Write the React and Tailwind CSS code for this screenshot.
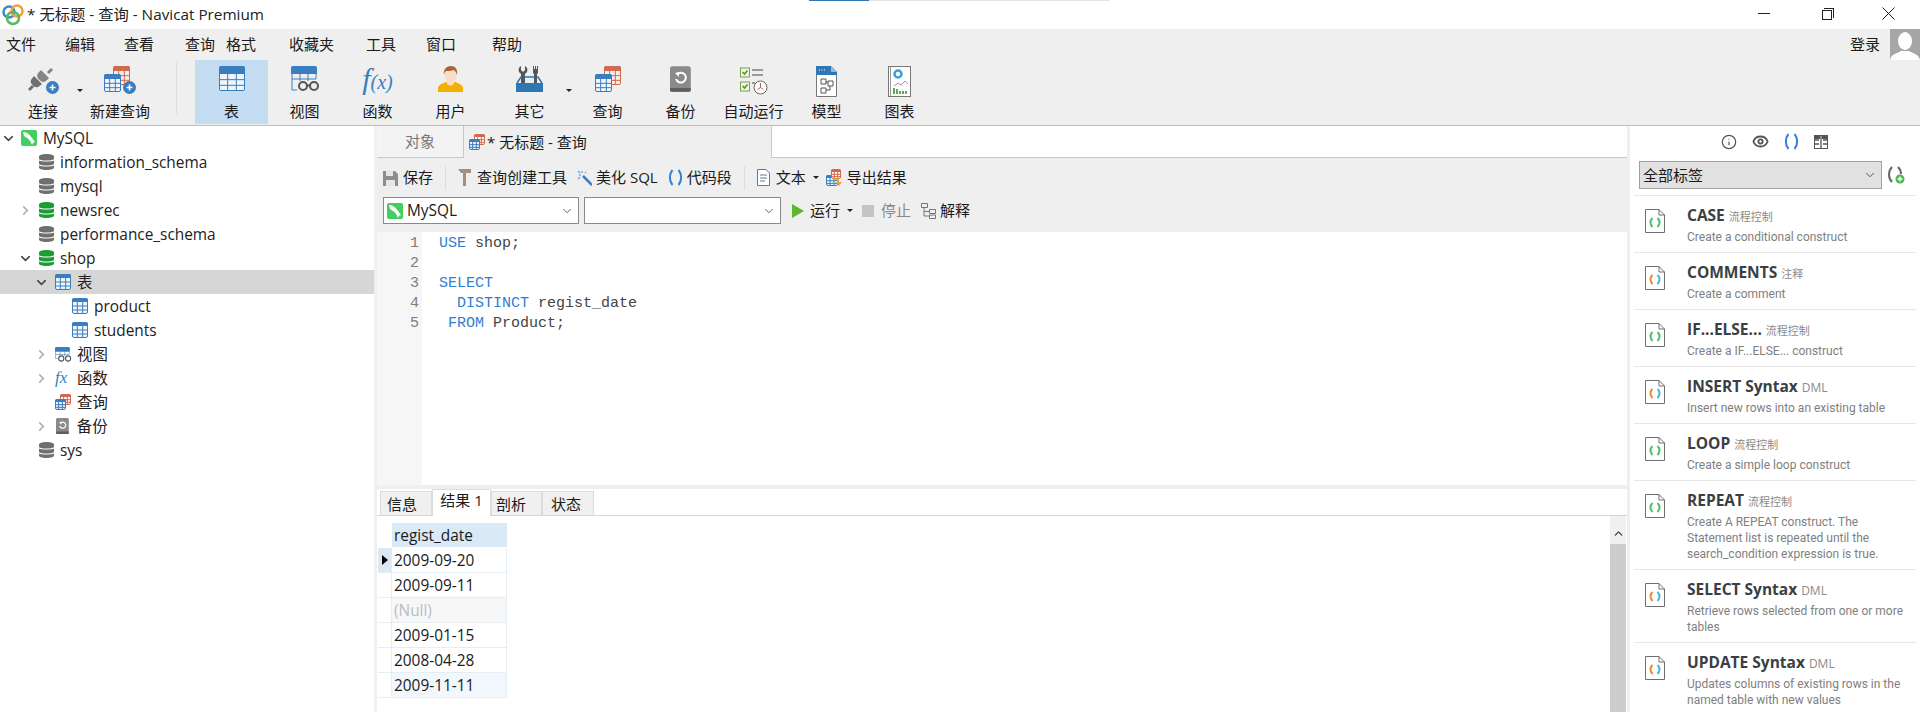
import { ChevronDown, ChevronRight, ChevronUp, Info, Eye } from "lucide-react"

const menus = [
  ["文件", "w-[59px]"],
  ["编辑", "w-[59px]"],
  ["查看", "w-[61px]"],
  ["查询", "w-[41px]"],
  ["格式", "w-[63px]"],
  ["收藏夹", "w-[77px]"],
  ["工具", "w-[60px]"],
  ["窗口", "w-[66px]"],
  ["帮助", "w-[60px]"],
]

const snippets = [
  { title: "CASE", tag: "流程控制", desc: ["Create a conditional construct"], kind: "flow", h: "h-[57px]" },
  { title: "COMMENTS", tag: "注释", desc: ["Create a comment"], kind: "dml", h: "h-[57px]" },
  { title: "IF...ELSE...", tag: "流程控制", desc: ["Create a IF...ELSE... construct"], kind: "flow", h: "h-[57px]" },
  { title: "INSERT Syntax", tag: "DML", desc: ["Insert new rows into an existing table"], kind: "dml", h: "h-[57px]" },
  { title: "LOOP", tag: "流程控制", desc: ["Create a simple loop construct"], kind: "flow", h: "h-[57px]" },
  { title: "REPEAT", tag: "流程控制", desc: ["Create A REPEAT construct. The", "Statement list is repeated until the", "search_condition expression is true."], kind: "flow", h: "h-[89px]" },
  { title: "SELECT Syntax", tag: "DML", desc: ["Retrieve rows selected from one or more", "tables"], kind: "dml", h: "h-[73px]" },
  { title: "UPDATE Syntax", tag: "DML", desc: ["Updates columns of existing rows in the", "named table with new values"], kind: "dml", h: "h-[73px]" },
]

const rows = [
  { v: "2009-09-20", selected: true },
  { v: "2009-09-11" },
  { v: "(Null)", empty: true },
  { v: "2009-01-15" },
  { v: "2008-04-28" },
  { v: "2009-11-11", last: true },
]

function Grid({ w = 26, h = 25, color = "#3a7ebf", head = 8, fill = "#eef5fb" }) {
  const cols = [w / 3, (2 * w) / 3]
  const lines = [head + (h - head) / 3, head + (2 * (h - head)) / 3]
  return (
    <svg width={w} height={h} viewBox={`0 0 ${w} ${h}`} className="block shrink-0">
      <rect x="0.5" y="0.5" width={w - 1} height={h - 1} rx="1.5" fill={fill} stroke={color} />
      <path d={`M0 2a2 2 0 0 1 2-2h${w - 4}a2 2 0 0 1 2 2v${head - 2}H0z`} fill={color} />
      {cols.map((c) => <path key={c} d={`M${c} ${head}V${h}`} stroke={color} strokeWidth="1" />)}
      {lines.map((l) => <path key={l} d={`M0 ${l}H${w}`} stroke={color} strokeWidth="1" />)}
    </svg>
  )
}

function PlusBadge() {
  return (
    <svg width="13" height="13" viewBox="0 0 13 13" className="absolute right-0 bottom-0">
      <circle cx="6.5" cy="6.5" r="6.5" fill="#3a7ebf" />
      <path d="M3.5 6.5h6M6.5 3.5v6" stroke="#fff" strokeWidth="1.6" />
    </svg>
  )
}

function QueryIcon({ big = true }) {
  if (!big) {
    return (
      <div className="relative w-[16px] h-[16px]">
        <div className="absolute right-0 top-0"><Grid w={11} h={11} color="#d0694f" head={3} fill="#fff" /></div>
        <div className="absolute left-0 bottom-0"><Grid w={11} h={11} head={3} /></div>
      </div>
    )
  }
  return (
    <div className="relative w-[26px] h-[26px]">
      <div className="absolute right-0 top-0"><Grid w={17} h={19} color="#d0694f" head={5} fill="#f9eeea" /></div>
      <div className="absolute left-0 bottom-0"><Grid w={17} h={18} head={5} /></div>
    </div>
  )
}

function PlugIcon() {
  return (
    <div className="relative w-[31px] h-[28px]">
      <svg width="27" height="26" viewBox="0 0 27 26" className="block">
        {/* socket half, upper right */}
        <path d="M13 4l8 8-2.500 2.500a4.500 4.500 0 0 1-6.500 0l-1.500-1.500a4.500 4.500 0 0 1 0-6.500z" fill="#858585" />
        <path d="M20 7l4-4" stroke="#858585" strokeWidth="3" />
        {/* plug half, lower left */}
        <path d="M6 10l8 8-2.500 2a4.500 4.500 0 0 1-6 0l-1.500-1.500a4.500 4.500 0 0 1 0-6z" fill="#6f6f6f" />
        <path d="M5 20l-4 4" stroke="#6f6f6f" strokeWidth="3" />
      </svg>
      <PlusBadge />
    </div>
  )
}

function ViewIcon() {
  return (
    <svg width="28" height="26" viewBox="0 0 28 26" className="block">
      <path d="M1 8v16h5M25 8v5" fill="none" stroke="#3a7ebf" />
      <path d="M0 2a2 2 0 0 1 2-2h22a2 2 0 0 1 2 2v6H0z" fill="#3a7ebf" />
      <path d="M9 8v7M17 8v7M1 13h24" stroke="#3a7ebf" />
      <circle cx="12" cy="20" r="4" fill="#efefef" stroke="#555" strokeWidth="2" />
      <circle cx="23" cy="20" r="4" fill="#efefef" stroke="#555" strokeWidth="2" />
      <path d="M15 19.500h5" stroke="#555" strokeWidth="2" />
    </svg>
  )
}

function UserIcon() {
  return (
    <svg width="25" height="26" viewBox="0 0 25 26" className="block">
      <path d="M0 26v-4c0-3 5-5 8-6h9c3 1 8 3 8 6v4z" fill="#f2b100" />
      <path d="M9 15h7v3l-3.500 2-3.500-2z" fill="#fbdcc4" />
      <ellipse cx="12.500" cy="9" rx="6" ry="8" fill="#fbdcc4" />
      <path d="M6 9c-1-6 3-9 7-9s7 3 6 9c-1-3-2-4-3-5-2 1-7 1-8 1-1 1-2 2-2 4z" fill="#a9643a" />
    </svg>
  )
}

function ToolsIcon() {
  return (
    <svg width="27" height="26" viewBox="0 0 27 26" className="block">
      <path d="M1 17l4-6h17l4 6" fill="#e4eef7" stroke="#2f76b5" strokeWidth="1.500" />
      <path d="M5 0v4l2 2 2-2V0c2 1 3 3 2 6l-2 2v9H5V8L3 6C2 3 3 1 5 0z" fill="#565656" />
      <path d="M17 0h1v3h1V0h1v3h1V0h1v7l-1 1v9h-3V8l-1-1z" fill="#565656" />
      <path d="M0 17h27v9H0z" fill="#2f76b5" />
    </svg>
  )
}

function BackupIcon({ s = 26 }) {
  return (
    <svg width={s * 0.8} height={s} viewBox="0 0 21 26" className="block">
      <rect width="21" height="26" rx="2.500" fill="#8a8a8a" />
      <path d="M0 22h21v2a2 2 0 0 1-2 2H2a2 2 0 0 1-2-2z" fill="#5e5e5e" />
      <path d="M7.500 8a5 5 0 1 1-1.300 5" fill="none" stroke="#fff" strokeWidth="2" />
      <path d="M5 7l4-1v5z" fill="#fff" />
    </svg>
  )
}

function AutoRunIcon() {
  return (
    <svg width="28" height="29" viewBox="0 0 28 29" className="block">
      <rect x="0.500" y="2" width="9" height="9" fill="#eef3e6" stroke="#77a350" />
      <rect x="0.500" y="16" width="9" height="9" fill="#eef3e6" stroke="#77a350" />
      <path d="M2.500 6l2 2 3-3.500M2.500 20l2 2 3-3.500" fill="none" stroke="#5d8f35" strokeWidth="1.600" />
      <path d="M12 4h11M12 9h11M12 17h3" stroke="#9a9a9a" strokeWidth="2" />
      <circle cx="20.500" cy="21.500" r="6.500" fill="#fff" stroke="#666" />
      <path d="M20.500 17v4.500l-3 2M20.500 21.500l3 2" fill="none" stroke="#b5675a" />
    </svg>
  )
}

function ModelIcon() {
  return (
    <svg width="21" height="31" viewBox="0 0 21 31" className="block">
      <path d="M0.500 8h20v22.500H0.500z" fill="#fff" stroke="#777" />
      <path d="M0 0h15l6 6v3H0z" fill="#2f76b5" />
      <path d="M15 0l6 6h-6z" fill="#8bbce6" />
      <path d="M3 4h1M5.500 4h1M8 4h1" stroke="#fff" />
      <path d="M5 13h5v5H5zM12 15h5v5h-5zM5 22h5v5H5z" fill="none" stroke="#555" />
      <path d="M10 16h2M10 24h4v-4" fill="none" stroke="#555" />
    </svg>
  )
}

function ChartIcon() {
  return (
    <svg width="23" height="31" viewBox="0 0 23 31" className="block">
      <rect x="0.500" y="0.500" width="22" height="30" fill="#fff" stroke="#777" />
      <path d="M2.500 1v29" stroke="#999" />
      <circle cx="10" cy="8" r="3.500" fill="none" stroke="#39a0d8" strokeWidth="2.500" />
      <path d="M6 20l4-3 3 2 4-4 3 3" fill="none" stroke="#c27bc8" />
      <path d="M6 28v-6M9 28v-5M12 28v-3M15 28v-3M18 28v-3" stroke="#47a447" strokeWidth="1.800" />
    </svg>
  )
}

function DbIcon({ color = "#6f6f6f" }) {
  return (
    <svg width="15" height="16" viewBox="0 0 15 16" className="block shrink-0">
      <path d="M0 2.500C0 1 3 0 7.500 0S15 1 15 2.500v2C15 6 12 6.500 7.500 6.500S0 6 0 4.500z" fill={color} />
      <path d="M0 6.500C2 7.800 13 7.800 15 6.500v3C15 11 12 11.500 7.500 11.500S0 11 0 9.500z" fill={color} />
      <path d="M0 11.500C2 12.800 13 12.800 15 11.500v2C15 15 12 16 7.500 16S0 15 0 13.500z" fill={color} />
    </svg>
  )
}

function MysqlIcon() {
  return (
    <svg width="16" height="16" viewBox="0 0 16 16" className="block shrink-0">
      <rect width="16" height="16" rx="2" fill="#43cf5f" />
      <path d="M2 2c4 0 7 3 9 6 1 1 2 3 3 4l-2 1-1 2c-1-3-3-6-5-7L3 6z" fill="#fff" />
    </svg>
  )
}

function SnippetIcon({ kind }) {
  const left = kind === "flow" ? "#4cc36a" : "#ec8a34"
  const right = kind === "flow" ? "#4cc36a" : "#52b5d8"
  return (
    <svg width="20" height="24" viewBox="0 0 20 24" className="block shrink-0">
      <path d="M0.500 0.500H14L19.500 6V23.500H0.500z" fill="#fff" stroke="#6f6f6f" />
      <path d="M14 0.500V6H19.500" fill="none" stroke="#6f6f6f" />
      <path d="M7.500 9C5 11.500 5 15 7.500 18" fill="none" stroke={left} strokeWidth="2" />
      <path d="M12.500 9C15 11.500 15 15 12.500 18" fill="none" stroke={right} strokeWidth="2" />
    </svg>
  )
}

function Caret() {
  return <span className="block w-0 h-0 border-x-[3px] border-x-transparent border-t-[3px] border-t-[#222]" />
}

function ToolButton({ label, children, active, className = "w-[73px]" }) {
  return (
    <div className={`h-[64px] flex flex-col items-center shrink-0 ${className} ${active ? "bg-[#c3dcf1]" : ""}`}>
      <div className="h-[35px] mt-[6px] flex items-start justify-center">{children}</div>
      <span className="text-[15px] leading-[20px] whitespace-nowrap">{label}</span>
    </div>
  )
}

function TreeRow({ pad, chevron, open, icon, label, active, gap = "ml-[6px]" }) {
  return (
    <div className={`h-[24px] flex items-center text-[15.4px] text-[#222] ${pad} ${active ? "bg-[#d6d6d6]" : ""}`}>
      <span className="w-[16px] flex justify-center shrink-0">
        {chevron && (open
          ? <ChevronDown size={15} strokeWidth={2.4} className="text-[#444]" />
          : <ChevronRight size={15} strokeWidth={2.4} className="text-[#aaa]" />)}
      </span>
      <span className="flex items-center">{icon}</span>
      <span className={`${gap} pt-[2px]`}>{label}</span>
    </div>
  )
}

function Sep({ className }) {
  return <span className={`w-px h-[24px] bg-[#dcdcdc] ${className}`} />
}

export default function App() {
  return (
    <div className="w-[1920px] h-[712px] overflow-hidden flex flex-col bg-white text-[#1a1a1a] font-['Open_Sans','Noto_Sans_CJK_SC',sans-serif]">
      {/* title bar */}
      <div className="relative h-[29px] flex items-center shrink-0">
        <div className="absolute left-[809px] top-0 w-[60px] h-[1px] bg-[#2e75b6]" />
        <div className="absolute left-[869px] top-0 w-[241px] h-[1px] bg-[#e3e3e3]" />
        <svg width="22" height="24" viewBox="0 0 22 24" className="ml-[2px] block">
          <circle cx="7" cy="9" r="5.500" fill="none" stroke="#3f86d6" strokeWidth="2.500" />
          <circle cx="15" cy="8" r="5.500" fill="none" stroke="#f0a23a" strokeWidth="2.500" />
          <circle cx="11" cy="15" r="6" fill="none" stroke="#5cb85c" strokeWidth="2.500" />
        </svg>
        <span className="ml-[3px] text-[15.3px] text-[#222]">* 无标题 - 查询 - Navicat Premium</span>
        <div className="ml-auto flex items-center pb-[2px]">
          <span className="w-[12px] h-px bg-[#222] mr-[52px]" />
          <span className="relative w-[12px] h-[12px] mr-[48px]">
            <span className="absolute left-0 bottom-0 w-[10px] h-[10px] border border-[#222] bg-white" />
            <span className="absolute right-0 top-0 w-[10px] h-[10px] border-t border-r border-[#222]" />
          </span>
          <svg width="13" height="13" viewBox="0 0 13 13" className="mr-[25px] block">
            <path d="M0.500 0.500l12 12M12.500 0.500l-12 12" stroke="#222" />
          </svg>
        </div>
      </div>

      {/* menu */}
      <div className="h-[31px] flex items-center bg-[#efefef] pl-[6px] text-[15px] shrink-0">
        {menus.map(([m, w]) => <span key={m} className={w}>{m}</span>)}
        <span className="ml-auto mr-[10px]">登录</span>
        <div className="w-[30px] h-[31px] bg-[#a6a6a6] overflow-hidden">
          <svg width="30" height="31" viewBox="0 0 30 31" className="block">
            <ellipse cx="15" cy="12" rx="7" ry="9" fill="#fff" />
            <path d="M0 31c1-6 8-7 11-9h8c3 2 10 3 11 9z" fill="#fff" />
          </svg>
        </div>
      </div>

      {/* toolbar */}
      <div className="h-[66px] flex bg-[#efefef] border-b border-[#bdbdbd] shrink-0">
        <ToolButton label="连接" className="w-[66px] ml-[10px]"><PlugIcon /></ToolButton>
        <div className="w-[8px] pt-[29px] pl-[1px]"><Caret /></div>
        <ToolButton label="新建查询" className="w-[72px]">
          <div className="relative w-[32px] h-[28px]"><QueryIcon /><PlusBadge /></div>
        </ToolButton>
        <span className="w-px h-[52px] mt-[2px] bg-[#dedede] ml-[20px] mr-[18px]" />
        <ToolButton label="表" active><Grid /></ToolButton>
        <ToolButton label="视图"><ViewIcon /></ToolButton>
        <ToolButton label="函数">
          <span className="font-['Liberation_Serif',serif] italic text-[#3a7ebf] text-[20px] leading-[26px]">
            <span className="text-[30px]">f</span>(x)
          </span>
        </ToolButton>
        <ToolButton label="用户"><UserIcon /></ToolButton>
        <ToolButton label="其它" className="w-[73px] ml-[6px]"><ToolsIcon /></ToolButton>
        <div className="w-[5px] pt-[29px]"><Caret /></div>
        <ToolButton label="查询"><QueryIcon /></ToolButton>
        <ToolButton label="备份"><BackupIcon /></ToolButton>
        <ToolButton label="自动运行"><AutoRunIcon /></ToolButton>
        <ToolButton label="模型"><ModelIcon /></ToolButton>
        <ToolButton label="图表"><ChartIcon /></ToolButton>
      </div>

      <div className="flex-1 flex min-h-0">
        {/* connection tree */}
        <div className="w-[374px] shrink-0 pt-0">
          <TreeRow pad="pl-0" chevron open icon={<span className="ml-[5px]"><MysqlIcon /></span>} label="MySQL" />
          <TreeRow pad="pl-[23px]" icon={<DbIcon />} label="information_schema" />
          <TreeRow pad="pl-[23px]" icon={<DbIcon />} label="mysql" />
          <TreeRow pad="pl-[17px]" chevron icon={<span className="ml-[6px]"><DbIcon color="#1e9b33" /></span>} label="newsrec" />
          <TreeRow pad="pl-[23px]" icon={<DbIcon />} label="performance_schema" />
          <TreeRow pad="pl-[17px]" chevron open icon={<span className="ml-[6px]"><DbIcon color="#1e9b33" /></span>} label="shop" />
          <TreeRow pad="pl-[33px]" chevron open active icon={<span className="ml-[6px]"><Grid w={16} h={16} head={4} /></span>} label="表" />
          <TreeRow pad="pl-[56px]" icon={<Grid w={16} h={16} head={4} />} label="product" />
          <TreeRow pad="pl-[56px]" icon={<Grid w={16} h={16} head={4} />} label="students" />
          <TreeRow pad="pl-[33px]" chevron icon={<span className="ml-[6px]"><svg width="16" height="15" viewBox="0 0 28 26" className="block"><path d="M0 2a2 2 0 0 1 2-2h22a2 2 0 0 1 2 2v6H0z" fill="#3a7ebf" /><path d="M1 8v12h6M25 8v4M9 8v8M17 8v8M1 13h24" fill="none" stroke="#3a7ebf" /><circle cx="11" cy="20" r="4.500" fill="#fff" stroke="#555" strokeWidth="2" /><circle cx="23" cy="20" r="4.500" fill="#fff" stroke="#555" strokeWidth="2" /></svg></span>} label="视图" />
          <TreeRow pad="pl-[33px]" chevron icon={<span className="ml-[6px] w-[16px] font-['Liberation_Serif',serif] italic text-[#3a7ebf] text-[17px] leading-[16px]">fx</span>} label="函数" />
          <TreeRow pad="pl-[33px]" icon={<span className="ml-[6px]"><QueryIcon big={false} /></span>} label="查询" />
          <TreeRow pad="pl-[33px]" chevron icon={<span className="ml-[7px]"><BackupIcon s={16} /></span>} label="备份" gap="ml-[8px]" />
          <TreeRow pad="pl-[23px]" icon={<DbIcon />} label="sys" />
        </div>
        <div className="w-[3px] bg-[#f0f0f0] shrink-0" />

        {/* query panel */}
        <div className="w-[1250px] shrink-0 flex flex-col min-h-0">
          <div className="h-[32px] flex shrink-0 border-b border-[#c8c8c8] bg-white">
            <div className="w-[87px] bg-[#f3f3f3] flex items-center justify-center text-[15px] text-[#777] border-r border-[#c8c8c8]">对象</div>
            <div className="w-[308px] h-[32px] bg-[#efefef] flex items-center pl-[5px] text-[15px] border-r border-[#c8c8c8]">
              <QueryIcon big={false} />
              <span className="ml-[2px]">* 无标题 - 查询</span>
            </div>
          </div>

          <div className="h-[74px] bg-[#efefef] shrink-0 text-[15px] pl-[6px]">
            <div className="h-[39px] flex items-center">
              <svg width="15" height="16" viewBox="0 0 15 16" className="block">
                <path d="M0 1h12l3 3v12H0z" fill="#8d8d8d" />
                <path d="M3 1h7v5H3zM3 10h9v6H3z" fill="#e6e6e6" />
              </svg>
              <span className="ml-[5px]">保存</span>
              <Sep className="ml-[12px]" />
              <svg width="13" height="17" viewBox="0 0 13 17" className="ml-[12px] block">
                <path d="M0 0h13v4H8v13H5V4H3z" fill="#a58f7c" />
              </svg>
              <span className="ml-[6px]">查询创建工具</span>
              <svg width="15" height="16" viewBox="0 0 15 16" className="ml-[10px] block">
                <path d="M6 6l9 9" stroke="#3a7ebf" strokeWidth="2.500" />
                <path d="M2 5h2M5 1v2M8 3l1-1M1 1l2 2M1 9l2-2" stroke="#6cb0e6" strokeWidth="1.500" />
              </svg>
              <span className="ml-[4px]">美化 SQL</span>
              <svg width="15" height="17" viewBox="0 0 15 17" className="ml-[10px] block">
                <path d="M4.500 1C1 5 1 12 4.500 16M10.500 1C14 5 14 12 10.500 16" fill="none" stroke="#2f80d8" strokeWidth="2" />
              </svg>
              <span className="ml-[4px]">代码段</span>
              <Sep className="ml-[12px]" />
              <svg width="13" height="17" viewBox="0 0 13 17" className="ml-[12px] block">
                <path d="M0.500 0.500H9L12.500 4V16.500H0.500z" fill="#fff" stroke="#5c7d99" />
                <path d="M3 6h7M3 9h7M3 12h5" stroke="#5c7d99" />
              </svg>
              <span className="ml-[6px]">文本</span>
              <span className="ml-[7px]"><Caret /></span>
              <span className="ml-[7px] relative w-[16px] h-[17px]">
                <span className="absolute left-0 bottom-0"><Grid w={12} h={11} head={3} /></span>
                <span className="absolute right-[1px] top-0"><Grid w={10} h={10} head={3} color="#d0694f" fill="#fff" /></span>
                <svg width="8" height="9" viewBox="0 0 8 9" className="absolute right-0 bottom-0 block"><path d="M0 1h5v4h3l-3 4-3-4h1V3H0z" fill="#f0a23a" /></svg>
              </span>
              <span className="ml-[5px]">导出结果</span>
            </div>
            <div className="h-[27px] flex items-center">
              <div className="w-[196px] h-[27px] bg-white border border-[#8a8a8a] flex items-center pl-[3px] pr-[4px]">
                <MysqlIcon />
                <span className="ml-[4px] text-[15.4px]">MySQL</span>
                <ChevronDown size={14} strokeWidth={1.5} className="ml-auto text-[#555]" />
              </div>
              <div className="w-[197px] h-[27px] ml-[5px] bg-white border border-[#8a8a8a] flex items-center justify-end pr-[4px]">
                <ChevronDown size={14} strokeWidth={1.5} className="text-[#555]" />
              </div>
              <span className="ml-[11px] w-0 h-0 border-y-[7px] border-y-transparent border-l-[12px] border-l-[#5cb82c]" />
              <span className="ml-[6px]">运行</span>
              <span className="ml-[7px]"><Caret /></span>
              <span className="ml-[9px] w-[12px] h-[12px] bg-[#c4c4c4]" />
              <span className="ml-[7px] text-[#8a8a8a]">停止</span>
              <svg width="15" height="16" viewBox="0 0 15 16" className="ml-[10px] block">
                <path d="M0.500 0.500h6v4h-6zM8.500 6.500h6v4h-6zM8.500 12h6v3.500h-6zM3 4.500V13h5.500M3 8.500h5.500" fill="none" stroke="#777" />
              </svg>
              <span className="ml-[4px]">解释</span>
            </div>
          </div>

          {/* sql editor */}
          <div className="h-[253px] flex shrink-0 font-['Liberation_Mono',monospace] text-[15px] leading-[20px] bg-white">
            <div className="w-[45px] bg-[#f6f6f6] text-right pr-[3px] text-[#7d7d7d] pt-[2px]">
              {[1, 2, 3, 4, 5].map((n) => <div key={n}>{n}</div>)}
            </div>
            <pre className="pl-[17px] pt-[2px] font-['Liberation_Mono',monospace] text-[#444]">
              <div><span className="text-[#2f80d0]">USE</span> shop;</div>
              <div>&nbsp;</div>
              <div><span className="text-[#2f80d0]">SELECT</span></div>
              <div>  <span className="text-[#2f80d0]">DISTINCT</span> regist_date</div>
              <div> <span className="text-[#2f80d0]">FROM</span> Product;</div>
            </pre>
          </div>
          <div className="h-[4px] bg-[#efefef] shrink-0" />

          {/* result tabs */}
          <div className="h-[27px] flex items-end pl-[3px] border-b border-[#d6d6d6] shrink-0 text-[15px]">
            <div className="w-[52px] h-[24px] bg-[#f0f0f0] border border-b-0 border-[#dcdcdc] flex items-center pl-[6px] pt-[2px]">信息</div>
            <div className="w-[59px] h-[27px] -mb-px bg-white border border-b-0 border-[#dcdcdc] flex items-center justify-center pb-[6px]">结果 1</div>
            <div className="w-[51px] h-[24px] bg-[#f0f0f0] border border-b-0 border-[#dcdcdc] flex items-center pl-[4px] pt-[2px]">剖析</div>
            <div className="w-[52px] h-[24px] bg-[#f0f0f0] border border-b-0 border-[#dcdcdc] flex items-center pl-[8px] pt-[2px]">状态</div>
          </div>

          {/* result grid */}
          <div className="flex-1 flex min-h-0">
            <div className="flex-1 pl-[1px] pt-[7px] text-[15.4px]">
              <div className="flex h-[25px]">
                <div className="w-[14px]" />
                <div className="w-[115px] bg-[#d9e9f6] border-b border-white pl-[2px] leading-[26px]">regist_date</div>
              </div>
              {rows.map((r) => (
                <div key={r.v} className="flex h-[25px]">
                  <div className={`w-[14px] border-r border-b border-[#e6eef5] flex items-center justify-center ${r.selected ? "bg-[#d9e9f6]" : ""}`}>
                    {r.selected && <span className="w-0 h-0 border-y-[5px] border-y-transparent border-l-[6px] border-l-black" />}
                  </div>
                  <div className={`w-[115px] border-r border-b border-[#e6eef5] pl-[2px] leading-[26px] ${r.empty ? "bg-[#f7f7f7] text-[#b9bcc6]" : ""} ${r.last ? "bg-[#f1f7fc]" : ""}`}>{r.v}</div>
                </div>
              ))}
            </div>
            <div className="w-[16px] flex flex-col bg-[#f0f0f0] shrink-0 mr-[1px]">
              <div className="h-[28px] flex items-center justify-center pt-[7px]">
                <ChevronUp size={13} strokeWidth={2.5} className="text-[#444]" />
              </div>
              <div className="flex-1 bg-[#cdcdcd]" />
            </div>
          </div>
        </div>
        <div className="w-[3px] bg-[#efefef] shrink-0" />

        {/* snippets panel */}
        <div className="flex-1 min-w-0 flex flex-col overflow-hidden">
          <div className="h-[35px] flex items-center shrink-0 pl-[91px] pb-[4px] text-[#555]">
            <Info size={16} strokeWidth={1.8} />
            <Eye size={17} strokeWidth={2.6} className="ml-[15px]" />
            <svg width="15" height="17" viewBox="0 0 15 17" className="ml-[15px] block">
              <path d="M4.500 1C1 5 1 12 4.500 16M10.500 1C14 5 14 12 10.500 16" fill="none" stroke="#2f80d8" strokeWidth="2" />
            </svg>
            <svg width="14" height="14" viewBox="0 0 14 14" className="ml-[15px] block">
              <rect x="0.500" y="0.500" width="13" height="13" fill="none" stroke="#555" />
              <path d="M7 0v14M0 5h5M0 9h5M9 5h5M9 9h5" stroke="#555" strokeWidth="1.300" />
              <path d="M1 1h5v3H1zM8 1h5v3H8z" fill="#555" />
            </svg>
          </div>
          <div className="h-[28px] flex items-center shrink-0 pl-[9px]">
            <div className="w-[243px] h-[28px] bg-[#e1e1e1] border border-[#a0a0a0] flex items-center pl-[3px] pr-[4px] text-[15px]">
              全部标签
              <ChevronDown size={14} strokeWidth={1.5} className="ml-auto text-[#444]" />
            </div>
            <div className="relative w-[18px] h-[18px] ml-[5px]">
              <svg width="18" height="18" viewBox="0 0 18 18" className="block">
                <path d="M5 1C1 5 1 12 5 16M11 1C13 3 14 5 14 8" fill="none" stroke="#666" strokeWidth="2" />
                <circle cx="13" cy="13" r="4.500" fill="#4cb84c" />
                <path d="M10.500 13h5M13 10.500v5" stroke="#fff" strokeWidth="1.400" />
              </svg>
            </div>
          </div>
          <div className="mt-[6px] pl-[4px] pr-[4px]">
            {snippets.map((s) => (
              <div key={s.title} className={`${s.h} border-t border-[#e6e6e6] flex pl-[11px] pt-[13px] shrink-0`}>
                <SnippetIcon kind={s.kind} />
                <div className="ml-[22px] -mt-[5px]">
                  <div className="h-[25px] flex items-baseline whitespace-nowrap">
                    <span className="font-bold text-[15.5px] text-[#3a3f44]">{s.title}</span>
                    <span className={`ml-[4px] text-[#8a8a8a] ${s.tag === "DML" ? "text-[12px]" : "text-[11px]"}`}>{s.tag}</span>
                  </div>
                  {s.desc.map((d) => <div key={d} className="font-['Roboto','Noto_Sans_CJK_SC',sans-serif] text-[12px] leading-[16px] text-[#808080] whitespace-nowrap">{d}</div>)}
                </div>
              </div>
            ))}
          </div>
        </div>
      </div>
    </div>
  )
}
